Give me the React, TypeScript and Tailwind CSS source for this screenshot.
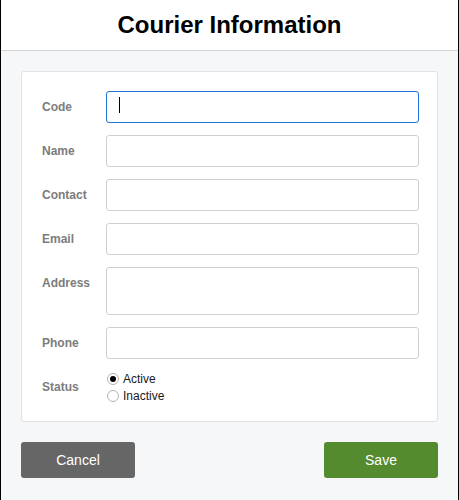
import React from "react";

const font = { fontFamily: '"Liberation Sans", Arial, sans-serif' };

function Row({ label, children }: { label: string; children: React.ReactNode }) {
  return (
    <div className="flex items-start">
      <div className="w-[64px] h-[32px] flex items-center text-[12px] font-bold text-[#7c7c7c] shrink-0">{label}</div>
      <div className="flex-1">{children}</div>
    </div>
  );
}

function Field({ tall = false, focused = false }: { tall?: boolean; focused?: boolean }) {
  return (
    <div
      className={`relative w-full rounded-[3px] bg-white border ${tall ? "h-[48px]" : "h-[32px]"} ${
        focused ? "border-[#1f74da]" : "border-[#cfcfcf]"
      }`}
    >
      {focused && <span className="absolute left-[12px] top-[5px] w-px h-[16px] bg-black" />}
    </div>
  );
}

function Radio({ label, checked }: { label: string; checked?: boolean }) {
  return (
    <label className="flex items-center h-[17px] text-[12px] text-[#1a1a1a]">
      <span className="w-[12px] h-[12px] ml-[1px] mr-[4px] rounded-full border border-[#b5b5b5] bg-white flex items-center justify-center">
        {checked && <span className="w-[6px] h-[6px] rounded-full bg-black" />}
      </span>
      {label}
    </label>
  );
}

export default function App() {
  return (
    <div className="w-[459px] h-[500px] flex flex-col border-x border-black bg-[#f6f7f9]" style={font}>
      <div className="h-[51px] shrink-0 bg-white border-b border-[#d4d4d4] flex items-center justify-center">
        <h1 className="text-[24px] font-bold text-black leading-none">Courier Information</h1>
      </div>
      <div className="px-[20px] pt-[20px]">
        <div className="bg-white border border-[#e2e2e2] rounded-[3px] pl-[20px] pr-[18px] pt-[19px] pb-[16px] flex flex-col gap-[12px]">
          <Row label="Code">
            <Field focused />
          </Row>
          <Row label="Name">
            <Field />
          </Row>
          <Row label="Contact">
            <Field />
          </Row>
          <Row label="Email">
            <Field />
          </Row>
          <Row label="Address">
            <Field tall />
          </Row>
          <Row label="Phone">
            <Field />
          </Row>
          <Row label="Status">
            <div className="flex flex-col -mt-[1px] pb-[1px]">
              <Radio label="Active" checked />
              <Radio label="Inactive" />
            </div>
          </Row>
        </div>
        <div className="flex justify-between mt-[20px]">
          <button type="button" className="w-[114px] h-[36px] rounded-[3px] bg-[#666666] text-white text-[14px]">
            Cancel
          </button>
          <button type="button" className="w-[114px] h-[36px] rounded-[3px] bg-[#558b2f] text-white text-[14px]">
            Save
          </button>
        </div>
      </div>
    </div>
  );
}
